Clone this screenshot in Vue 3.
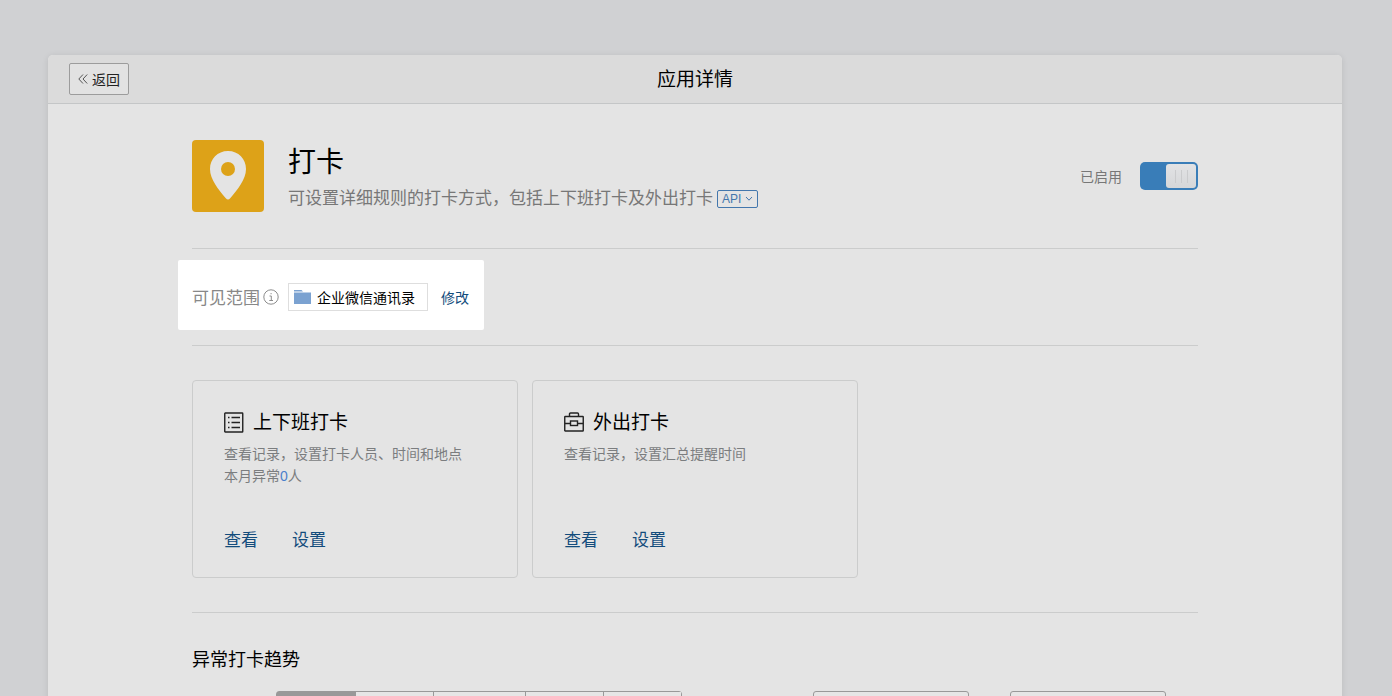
<script setup>
import { ref } from "vue";

const enabled = ref(true);
const activeTab = ref(0);
const tabs = ["normal", "normal", "wide", "normal", "normal"];
const startDate = ref("");
const endDate = ref("");

const cards = [
  {
    id: "commute",
    title: "上下班打卡",
    description: "查看记录，设置打卡人员、时间和地点",
    abnormal: 0,
  },
  {
    id: "outing",
    title: "外出打卡",
    description: "查看记录，设置汇总提醒时间",
  },
];
</script>

<template>
  <div class="page">
    <main class="panel">
      <header class="panel-header">
        <div class="header-side">
          <button class="back" type="button">
            <svg width="10" height="10" viewBox="0 0 10 10">
              <path d="M5 0.5 0.8 5 5 9.5M9.2 0.5 5 5 9.2 9.5" />
            </svg>
            返回
          </button>
        </div>
        <h1>应用详情</h1>
        <div class="header-side"></div>
      </header>

      <div class="content">
        <section class="app">
          <svg class="app-icon" width="72" height="72" viewBox="0 0 72 72">
            <rect width="72" height="72" rx="4" fill="#dda218" />
            <path
              d="M36 11C25.500 11 18 19 18 29C18 39.500 26.500 49.500 33.800 58.300Q36 60.800 38.200 58.300C45.500 49.500 54 39.500 54 29C54 19 46.500 11 36 11Z"
              fill="#e4e4e4"
            />
            <circle cx="36" cy="29" r="7" fill="#dda218" />
          </svg>
          <div class="app-text">
            <h2>打卡</h2>
            <div class="app-description">
              <span>可设置详细规则的打卡方式，包括上下班打卡及外出打卡</span>
              <button class="api" type="button">
                API
                <svg width="8" height="6" viewBox="0 0 8 6">
                  <path d="M1 1 4 4.2 7 1" />
                </svg>
              </button>
            </div>
          </div>
          <label class="switch">
            <span>已启用</span>
            <input v-model="enabled" type="checkbox" />
            <span class="track"><span class="knob"><i></i><i></i><i></i></span></span>
          </label>
        </section>

        <section class="scope">
          <div class="scope-box">
            <span class="scope-label">可见范围</span>
            <svg class="info" width="16" height="16" viewBox="0 0 16 16">
              <circle cx="8" cy="8" r="7.200" />
              <path d="M6.500 7H8.300V11.300M6.300 11.500H10M7.500 4.700H8.700" />
            </svg>
            <div class="department">
              <svg width="17" height="14" viewBox="0 0 17 14">
                <path d="M0 0H7.500L9 1.500H0ZM0 2.500H17V14H0Z" fill="#7ba2d1" />
              </svg>
              企业微信通讯录
            </div>
            <a href="#">修改</a>
          </div>
        </section>

        <section class="cards">
          <article v-for="card in cards" :key="card.id" class="card">
            <h3>
              <svg v-if="card.id === 'commute'" width="20" height="22" viewBox="0 0 20 22">
                <rect x="0.750" y="1" width="18" height="19" rx="0.500" />
                <path d="M4 5.500H5.500M7.500 5.500H16M4 10.500H5.500M7.500 10.500H16M4 15.500H5.500M7.500 15.500H16" />
              </svg>
              <svg v-else width="20" height="22" viewBox="0 0 20 22">
                <rect x="0.750" y="4.500" width="18.500" height="14.500" rx="0.500" />
                <path d="M5.500 4.500V2Q5.500 1 6.500 1H13.500Q14.500 1 14.500 2V4.500" />
                <path d="M1 11.500H6.500M13.500 11.500H19" />
                <rect x="6.500" y="9" width="7" height="4.500" />
              </svg>
              {{ card.title }}
            </h3>
            <p>{{ card.description }}</p>
            <p v-if="card.abnormal !== undefined">
              本月异常<span class="count">{{ card.abnormal }}</span>人
            </p>
            <div class="links">
              <a href="#">查看</a>
              <a href="#">设置</a>
            </div>
          </article>
        </section>

        <section class="trend">
          <h3>异常打卡趋势</h3>
          <div class="filters">
            <div class="tabs">
              <button
                v-for="(size, i) in tabs"
                :key="i"
                type="button"
                :class="[size, { active: i === activeTab }]"
                @click="activeTab = i"
              ></button>
            </div>
            <div class="dates">
              <input v-model="startDate" type="text" aria-label="开始日期" />
              <input v-model="endDate" type="text" aria-label="结束日期" />
            </div>
          </div>
        </section>
      </div>
    </main>
  </div>
</template>

<style>
body {
  margin: 0;
  background: #d0d1d3;
}
</style>

<style scoped>
.page {
  box-sizing: border-box;
  height: 100vh;
  overflow: hidden;
  padding: 55px 50px 0 48px;
  background: #d0d1d3;
  color: #000;
  font-family: "Liberation Sans", "Noto Sans CJK SC", sans-serif;
}

h1,
h2,
h3,
p {
  margin: 0;
  font-weight: normal;
}

button,
input {
  box-sizing: border-box;
  margin: 0;
  font-family: inherit;
}

a {
  color: #134c7c;
  text-decoration: none;
}

svg {
  flex: none;
}

.panel {
  min-height: 100vh;
  border-radius: 5px 5px 0 0;
  background: #e4e4e4;
  box-shadow: 0 1px 6px rgba(0, 0, 0, 0.1);
}

.panel-header {
  display: flex;
  align-items: center;
  height: 48px;
  padding: 0 21px;
  border-bottom: 1px solid #c4c6c7;
  border-radius: 5px 5px 0 0;
  background: #dbdbdb;
}

.header-side {
  flex: 1;
}

.panel-header h1 {
  padding-top: 2px;
  font-size: 19px;
  line-height: 28px;
}

.back {
  display: flex;
  align-items: center;
  gap: 4px;
  height: 32px;
  padding: 0 8px;
  border: 1px solid #9c9c9c;
  border-radius: 2px;
  background: #e2e2e2;
  color: #222;
  font-size: 14px;
}

.back svg {
  fill: none;
  stroke: #555;
}

.content {
  padding: 0 144px;
}

.app {
  display: flex;
  align-items: center;
  padding: 36px 0;
  border-bottom: 1px solid #cbcccc;
}

.app-text {
  flex: 1;
  margin-left: 24px;
}

.app-text h2 {
  font-size: 28px;
  line-height: 46px;
}

.app-description {
  display: flex;
  align-items: center;
  gap: 4px;
  color: #777;
  font-size: 17px;
  line-height: 26px;
}

.api {
  display: flex;
  align-items: center;
  gap: 4px;
  height: 18px;
  padding: 0 4px;
  border: 1px solid #4377ad;
  border-radius: 2px;
  background: none;
  color: #4377ad;
  font-size: 12px;
}

.api svg {
  fill: none;
  stroke: #4377ad;
}

.switch {
  display: flex;
  align-items: center;
  color: #777;
  font-size: 14px;
}

.switch input {
  width: 1px;
  height: 1px;
  appearance: none;
}

.track {
  display: flex;
  box-sizing: border-box;
  width: 58px;
  height: 28px;
  margin-left: 17px;
  padding: 2px;
  border-radius: 5px;
  background: #aaa;
}

.knob {
  display: flex;
  align-items: center;
  justify-content: center;
  gap: 5px;
  width: 30px;
  border-radius: 3px;
  background: linear-gradient(#e2e3e5, #d6d7d9);
}

.knob i {
  width: 1px;
  height: 13px;
  background: #cacbcd;
}

.switch input:checked + .track {
  justify-content: flex-end;
  background: #397db8;
}

.scope {
  display: flex;
  padding: 11px 0 15px;
  border-bottom: 1px solid #cbcccc;
}

.scope-box {
  display: flex;
  align-items: center;
  height: 70px;
  margin-left: -14px;
  padding: 3px 15px 0 14px;
  box-sizing: border-box;
  border-radius: 2px;
  background: #fff;
  font-size: 14px;
}

.scope-label {
  color: #888;
  font-size: 17px;
}

.info {
  margin: 0 9px 0 3px;
  fill: none;
  stroke: #8c8c8c;
}

.department {
  display: flex;
  align-items: center;
  gap: 6px;
  height: 26px;
  margin-right: 13px;
  padding: 0 12px 0 5px;
  border: 1px solid #dedede;
}

.cards {
  display: flex;
  gap: 14px;
  padding: 34px 0;
  border-bottom: 1px solid #cbcccc;
}

.card {
  display: flex;
  flex-direction: column;
  box-sizing: border-box;
  width: 326px;
  min-height: 198px;
  padding: 27px 31px 23px;
  border: 1px solid #cbcccc;
  border-radius: 4px;
}

.card h3 {
  display: flex;
  align-items: center;
  gap: 9px;
  margin-bottom: 5px;
  font-size: 19px;
  line-height: 30px;
}

.card h3 svg {
  fill: none;
  stroke: #222;
  stroke-width: 1.4;
}

.card p {
  color: #7b7d7f;
  font-size: 14px;
  line-height: 22px;
}

.count {
  color: #4b80cc;
}

.links {
  display: flex;
  gap: 34px;
  margin-top: auto;
  font-size: 17px;
  line-height: 26px;
}

.trend {
  padding-top: 33px;
}

.trend h3 {
  font-size: 18px;
  line-height: 28px;
}

.filters {
  display: flex;
  justify-content: space-between;
  margin: 17px 32px 0 84px;
}

.tabs {
  display: flex;
  border: 1px solid #999;
  border-radius: 3px;
}

.tabs button {
  width: 78px;
  height: 34px;
  padding: 0;
  border: 0;
  background: #e6e6e6;
}

.tabs .wide {
  width: 92px;
}

.tabs button + button {
  border-left: 1px solid #999;
}

.tabs .active {
  background: #999;
}

.dates {
  display: flex;
  gap: 41px;
}

.dates input {
  width: 156px;
  height: 36px;
  border: 1px solid #999;
  border-radius: 3px;
  background: #e6e6e6;
}
</style>
